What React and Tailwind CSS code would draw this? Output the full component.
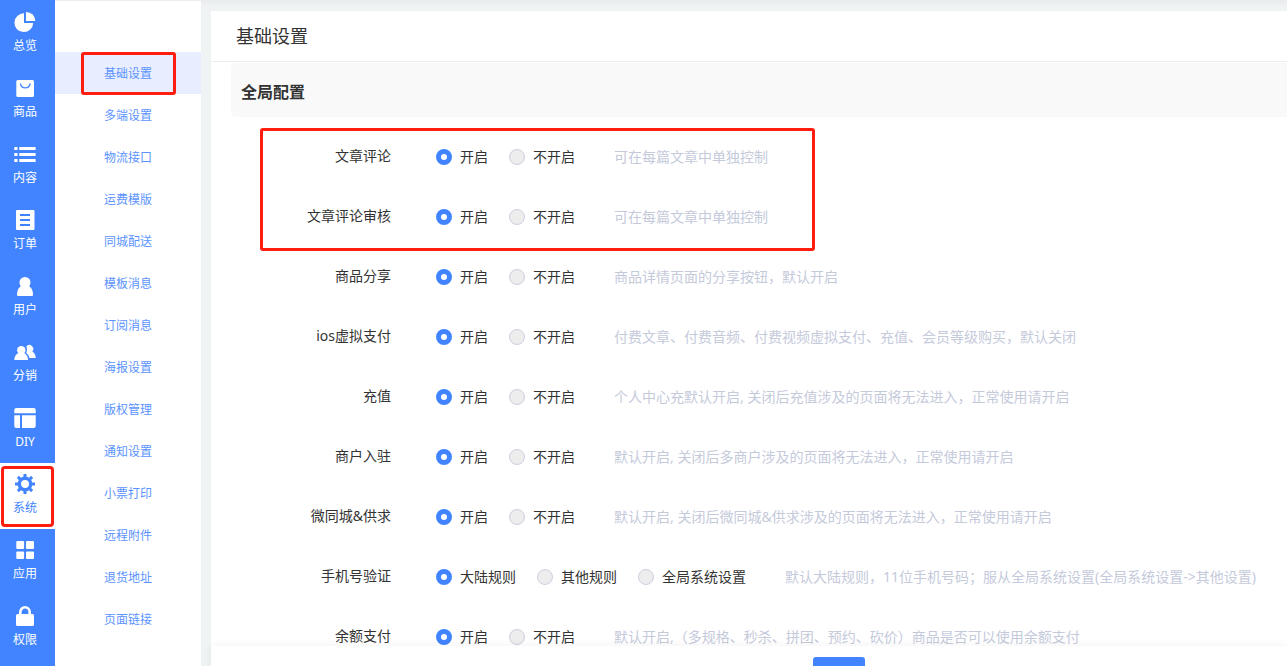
import React, { useState } from "react";
import clsx from "clsx";

const icons = {
  pie: (
    <>
      <path d="M11 2.3A9.4 9.4 0 1 0 20.2 12H11V2.3Z" />
      <path d="M13 1v9h9.4A9.2 9.2 0 0 0 13 1Z" />
    </>
  ),
  bag: (
    <>
      <rect x="3.3" y="3" width="17.7" height="17" rx="1.5" />
      <path
        d="M7.5 6.8a4.9 5 0 0 0 9.6 0"
        fill="none"
        stroke="#4284ff"
        strokeWidth="1.3"
        strokeLinecap="round"
      />
    </>
  ),
  list: (
    <path d="M1.3 4h3.2v3H1.3zM6.3 4h16.3v3H6.3zM1.3 10h3.2v3H1.3zM6.3 10h16.3v3H6.3zM1.3 16h3.2v3H1.3zM6.3 16h16.3v3H6.3z" />
  ),
  order: (
    <path
      fillRule="evenodd"
      d="M4 1h16.500q1 0 1 1v18q0 1-1 1H4q-1 0-1-1V2q0-1 1-1ZM7 5v2h10V5ZM7 10v2h10v-2ZM7 15v2h10v-2Z"
    />
  ),
  user: (
    <>
      <circle cx="12" cy="7.5" r="5.5" />
      <path d="M8 11h8c3 2 4 5 4 9q0 1-1 1H5q-1 0-1-1c0-4 1-7 4-9Z" />
    </>
  ),
  users: (
    <>
      <circle cx="8.3" cy="9.2" r="4.2" />
      <path d="M5.5 12h5.6c2.8 1.5 3.9 4 3.9 7H1.3c0-3 1.2-5.5 4.2-7Z" />
      <path d="M13.3 5.4A3.7 3.7 0 1 1 19.3 10.4C21.6 11.8 22.7 14 22.7 17h-6.3c-.4-2.200-1.5-3.800-3.200-5 1-2 1.100-4.600.1-6.600Z" />
    </>
  ),
  layout: (
    <path d="M3.3 1h17.4q2 0 2 2v3.3H1.3V3q0-2 2-2ZM1.3 8.3H7V21H3.3q-2 0-2-2ZM9 8.3h13.700V19q0 2-2 2H9Z" />
  ),
  gear: (
    <>
      <circle cx="12" cy="11" r="5.7" fill="none" stroke="currentColor" strokeWidth="3.4" />
      <path
        d="M12 1v4M12 17v4M2 11h4M18 11h4M4.900 3.900l2.800 2.800M16.300 15.300l2.800 2.800M4.900 18.100l2.800-2.800M16.300 6.700l2.800-2.800"
        stroke="currentColor"
        strokeWidth="3"
      />
    </>
  ),
  grid: (
    <>
      <rect x="3.3" y="2" width="7.8" height="8" rx="1" />
      <rect x="13" y="2" width="8" height="8" rx="1" />
      <rect x="3.3" y="12.5" width="7.8" height="7.5" rx="1" />
      <rect x="13" y="12.5" width="8" height="7.5" rx="1" />
    </>
  ),
  lock: (
    <>
      <rect x="3" y="9" width="18" height="12" rx="1.5" />
      <path d="M7.3 10V7.2a4.7 4.9 0 0 1 9.4 0V10" fill="none" stroke="currentColor" strokeWidth="2.6" />
    </>
  ),
};

const navItems = [
  { label: "总览", icon: "pie" },
  { label: "商品", icon: "bag" },
  { label: "内容", icon: "list" },
  { label: "订单", icon: "order" },
  { label: "用户", icon: "user" },
  { label: "分销", icon: "users" },
  { label: "DIY", icon: "layout" },
  { label: "系统", icon: "gear" },
  { label: "应用", icon: "grid" },
  { label: "权限", icon: "lock" },
];

const subItems = [
  "基础设置",
  "多端设置",
  "物流接口",
  "运费模版",
  "同城配送",
  "模板消息",
  "订阅消息",
  "海报设置",
  "版权管理",
  "通知设置",
  "小票打印",
  "远程附件",
  "退货地址",
  "页面链接",
];

const onOff = ["开启", "不开启"];

const articleSettings = [
  { name: "comment", label: "文章评论", options: onOff, hint: "可在每篇文章中单独控制" },
  { name: "audit", label: "文章评论审核", options: onOff, hint: "可在每篇文章中单独控制" },
];

const otherSettings = [
  { name: "share", label: "商品分享", options: onOff, hint: "商品详情页面的分享按钮，默认开启" },
  {
    name: "ios",
    label: "ios虚拟支付",
    options: onOff,
    hint: "付费文章、付费音频、付费视频虚拟支付、充值、会员等级购买，默认关闭",
  },
  {
    name: "recharge",
    label: "充值",
    options: onOff,
    hint: "个人中心充默认开启, 关闭后充值涉及的页面将无法进入，正常使用请开启",
  },
  {
    name: "merchant",
    label: "商户入驻",
    options: onOff,
    hint: "默认开启, 关闭后多商户涉及的页面将无法进入，正常使用请开启",
  },
  {
    name: "city",
    label: "微同城&供求",
    options: onOff,
    hint: "默认开启, 关闭后微同城&供求涉及的页面将无法进入，正常使用请开启",
  },
  {
    name: "phone",
    label: "手机号验证",
    options: ["大陆规则", "其他规则", "全局系统设置"],
    hint: "默认大陆规则，11位手机号码；服从全局系统设置(全局系统设置->其他设置)",
  },
  {
    name: "balance",
    label: "余额支付",
    options: onOff,
    hint: "默认开启,（多规格、秒杀、拼团、预约、砍价）商品是否可以使用余额支付",
  },
];

const SettingRow = ({ name, label, options, hint }) => {
  const [value, setValue] = useState(options[0]);

  return (
    <fieldset
      aria-labelledby={`${name}-label`}
      className="flex h-[60px] items-center whitespace-nowrap text-sm text-[#333]"
    >
      <span id={`${name}-label`} className="w-[180px] shrink-0 pb-0.5 text-right">
        {label}
      </span>
      <div className="ml-[45px] flex gap-[21px]">
        {options.map((option) => (
          <label key={option} className="flex items-center gap-2">
            <input
              type="radio"
              name={name}
              value={option}
              checked={value === option}
              onChange={() => setValue(option)}
              className="size-4 appearance-none rounded-full border border-[#ccd0e0] bg-[#ededed] checked:border-[5px] checked:border-[#4284ff] checked:bg-white"
            />
            {option}
          </label>
        ))}
      </div>
      <span className="ml-[39px] text-[#c5cadb]">{hint}</span>
    </fieldset>
  );
};

const App = () => {
  return (
    <div className="flex h-screen overflow-hidden bg-[#eff3f4] font-['Noto_Sans','Noto_Sans_CJK_SC',sans-serif]">
      {/* Main navigation */}
      <nav className="w-[55px] shrink-0 bg-[#4284ff] pt-px">
        {navItems.map((item) => {
          const active = item.label === "系统";
          return (
            <a
              key={item.label}
              href="#"
              className={clsx(
                "relative flex h-[66px] flex-col items-center pt-[10px] pr-[5px] text-xs leading-[22px]",
                active ? "bg-white text-[#4284ff]" : "text-white"
              )}
            >
              <svg viewBox="0 0 24 24" className="size-6 shrink-0" fill="currentColor">
                {icons[item.icon]}
              </svg>
              {item.label}
              {active && (
                <span className="absolute inset-x-px top-[3px] bottom-[2px] rounded-[4px] border-3 border-[#ff1d10]" />
              )}
            </a>
          );
        })}
      </nav>

      {/* Sub navigation */}
      <nav className="w-[146px] shrink-0 border-t border-[#ebecec] bg-white pt-[51px]">
        {subItems.map((label, index) => (
          <a
            key={label}
            href="#"
            className={clsx(
              "relative flex h-[42px] items-center justify-center pt-0.5 text-xs text-[#5b93ff]",
              index === 0 && "bg-[#e8eeff]"
            )}
          >
            {label}
            {index === 0 && (
              <span className="absolute top-0 left-[26px] h-[43px] w-[95px] rounded-[3px] border-3 border-[#ff1d10]" />
            )}
          </a>
        ))}
      </nav>

      <div className="flex min-w-0 flex-1 flex-col border-t border-[#ebecec] pl-[10px]">
        <div className="-ml-[10px] h-[10px] shrink-0 bg-linear-to-b from-[#e9eced] to-[#eff3f4] to-50%" />
        <main className="flex min-h-0 flex-1 flex-col bg-white">
          <h1 className="shrink-0 border-b border-[#ececec] px-[25px] text-lg leading-[50px] text-[#333]">
            基础设置
          </h1>
          <div className="min-h-0 flex-1 overflow-hidden pt-px">
            <h2 className="mb-[10px] ml-5 rounded-l-[5px] bg-[#f9f9f9] px-[10px] pt-[15px] pb-[11px] text-base leading-7 font-bold text-[#333]">
              全局配置
            </h2>
            <div className="relative">
              {articleSettings.map((row) => (
                <SettingRow key={row.name} {...row} />
              ))}
              <span className="pointer-events-none absolute top-px left-[49px] h-[123px] w-[555px] rounded-[3px] border-3 border-[#ff1d10]" />
            </div>
            {otherSettings.map((row) => (
              <SettingRow key={row.name} {...row} />
            ))}
          </div>
          <footer className="relative flex h-5 justify-center bg-white pt-[11px] pl-[180px] shadow-[0_0_8px_rgba(0,0,0,0.06)]">
            <button type="submit" className="h-9 w-[52px] shrink-0 rounded-[3px] bg-[#4284ff]" />
          </footer>
        </main>
      </div>
    </div>
  );
};

export default App;
